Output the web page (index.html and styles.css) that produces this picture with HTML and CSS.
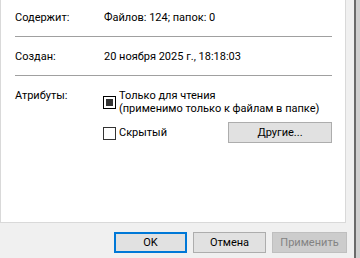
FILE: index.html
```html
<!DOCTYPE html>
<html lang="ru">
<head>
    <meta charset="UTF-8">
    <title>Свойства</title>
    <link rel="stylesheet" href="styles.css">
</head>
<body>
    <div class="window">
        <div class="dialog">
            <!-- General tab content -->
            <div class="panel">
                <div class="row row-contains">
                    <span class="label">Содержит:</span>
                    <span class="value">Файлов: 124; папок: 0</span>
                </div>
                <div class="sep"></div>
                <div class="row row-created">
                    <span class="label">Создан:</span>
                    <span class="value">20 ноября 2025 г., 18:18:03</span>
                </div>
                <div class="sep"></div>
                <div class="row row-attrs">
                    <span class="label">Атрибуты:</span>
                    <div class="attr-list">
                        <div class="check">
                            <span class="box checked"></span>
                            <span class="check-text">Только для чтения<br>(применимо только к файлам в папке)</span>
                        </div>
                        <div class="attr-line">
                            <div class="check">
                                <span class="box"></span>
                                <span class="check-text">Скрытый</span>
                            </div>
                            <button class="btn btn-other">Другие...</button>
                        </div>
                    </div>
                </div>
            </div>

            <!-- Dialog buttons -->
            <div class="footer">
                <button class="btn btn-default">OK</button>
                <button class="btn">Отмена</button>
                <button class="btn btn-disabled">Применить</button>
            </div>
        </div>
        <div class="edge"></div>
    </div>
</body>
</html>
```

FILE: styles.css
```css
* {
    margin: 0;
    padding: 0;
    box-sizing: border-box;
}

body {
    background: #f0f0f0;
    color: #000;
    font-family: Roboto, 'Liberation Sans', sans-serif;
    font-size: 11px;
    width: 360px;
    height: 258px;
    overflow: hidden;
}

.window {
    display: flex;
    height: 258px;
}

.dialog {
    width: 354px;
    display: flex;
    flex-direction: column;
}

/* White tab page */
.panel {
    width: 346px;
    height: 223px;
    background: #fff;
    border-left: 1px solid #d9d9d9;
    border-right: 1px solid #d9d9d9;
    border-bottom: 1px solid #d9d9d9;
    padding: 0 13px 0 14px;
}

.row {
    display: grid;
    grid-template-columns: 89px 1fr;
    line-height: 15px;
    white-space: nowrap;
}

.row-contains {
    height: 36px;
    padding-top: 10px;
}

.row-created {
    height: 38px;
    padding-top: 12px;
}

.row-attrs {
    padding-top: 13px;
    line-height: 13px;
}

.sep {
    height: 1px;
    background: #a0a0a0;
}

.attr-list {
    display: flex;
    flex-direction: column;
    gap: 7px;
    margin-left: -1px;
}

.check {
    display: flex;
    align-items: center;
    gap: 3px;
}

.box {
    width: 13px;
    height: 13px;
    border: 1px solid #333;
    background: #fff;
    padding: 2px;
    flex-shrink: 0;
    margin-top: 1px;
}

.box.checked {
    border-color: #000;
}

.box.checked::after {
    content: '';
    display: block;
    width: 7px;
    height: 7px;
    background: #333;
}

.attr-line {
    display: flex;
    align-items: center;
    justify-content: space-between;
}

/* Buttons */
.btn {
    font-family: inherit;
    font-size: 11px;
    color: #000;
    height: 21px;
    width: 73px;
    background: #e1e1e1;
    border: 1px solid #adadad;
}

.btn-other {
    width: 104px;
}

.btn-default {
    border: 2px solid #0078d7;
}

.btn-disabled {
    width: 75px;
    background: #cccccc;
    border-color: #bfbfbf;
    color: #838383;
}

.footer {
    display: flex;
    justify-content: flex-end;
    gap: 6px;
    padding: 9px 7px 0 0;
}

/* Neighbouring window edge */
.edge {
    flex: 1;
    border-left: 2px solid #6a6a6a;
    background: #cfcfcf;
}
```
